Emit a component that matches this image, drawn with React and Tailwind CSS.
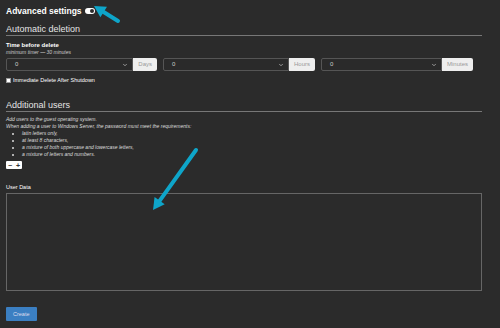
import { ChevronDown } from 'lucide-react';

function Arrow({ className, x1, y1, x2, y2 }) {
  const angle = Math.atan2(y2 - y1, x2 - x1);
  const len = 13;
  const spread = 0.5;
  const ax = x2 - len * Math.cos(angle - spread);
  const ay = y2 - len * Math.sin(angle - spread);
  const bx = x2 - len * Math.cos(angle + spread);
  const by = y2 - len * Math.sin(angle + spread);
  const sx = x2 - len * 0.8 * Math.cos(angle);
  const sy = y2 - len * 0.8 * Math.sin(angle);
  return (
    <svg className={className} width="500" height="328" viewBox="0 0 500 328">
      <line x1={x1} y1={y1} x2={sx} y2={sy} stroke="#0ea5c9" strokeWidth="4" strokeLinecap="round" />
      <polygon points={`${x2},${y2} ${ax},${ay} ${bx},${by}`} fill="#0ea5c9" />
    </svg>
  );
}

function TimeSelect({ label, width }) {
  return (
    <div className={`flex h-[13px] ${width}`}>
      <div className="flex flex-1 items-center justify-between rounded-l-[2px] border border-[#555] bg-[#2a2a2a] pl-2 pr-1 text-[6px] text-[#ccc]">
        <span>0</span>
        <ChevronDown size={6} strokeWidth={3} className="text-[#bbb]" />
      </div>
      <div className="flex items-center rounded-r-[2px] bg-[#eee] px-[5px] text-[6px] text-[#999]">{label}</div>
    </div>
  );
}

export default function App() {
  return (
    <div className="relative h-[328px] w-[500px] overflow-hidden bg-[#2b2b2b] font-['Liberation_Sans',Arial,sans-serif] text-[#ddd]">
      <div className="flex flex-col pl-[6px] pr-[18px]">
        <div className="flex h-[21px] items-center gap-[3px] pt-[1px]">
          <span className="text-[8.5px] font-bold text-white">Advanced settings</span>
          <span className="flex h-[6px] w-[10px] items-center justify-end rounded-full bg-white pr-[1px]">
            <span className="h-[4px] w-[4px] rounded-full bg-[#2b2b2b]" />
          </span>
        </div>

        <div className="mt-[3px] border-b border-[#777] text-[9px] leading-[11px] text-[#e5e5e5]">Automatic deletion</div>
        <div className="mt-[5px] text-[6px] font-bold leading-[8px] text-white">Time before delete</div>
        <div className="text-[5px] italic leading-[7px] text-[#ccc]">minimum timer — 30 minutes</div>

        <div className="mt-[2px] flex gap-[6px]">
          <TimeSelect label="Days" width="w-[151px]" />
          <TimeSelect label="Hours" width="w-[152px]" />
          <TimeSelect label="Minutes" width="w-[152px]" />
        </div>

        <div className="mt-[5px] flex items-center gap-[2px]">
          <span className="h-[5px] w-[5px] border border-[#999] bg-white" />
          <span className="text-[5.5px] leading-[8px] text-white">Immediate Delete After Shutdown</span>
        </div>

        <div className="mt-[16px] border-b border-[#777] text-[9px] leading-[11px] text-[#e5e5e5]">Additional users</div>
        <div className="mt-[4px] text-[5px] italic leading-[7px] text-[#ddd]">Add users to the guest operating system.</div>
        <div className="text-[5px] italic leading-[7px] text-[#ddd]">When adding a user to Windows Server, the password must meet the requirements:</div>
        <ul className="ml-[16px] list-disc text-[5px] italic leading-[7px] text-[#ddd]">
          <li>latin letters only,</li>
          <li>at least 8 characters,</li>
          <li>a mixture of both uppercase and lowercase letters,</li>
          <li>a mixture of letters and numbers.</li>
        </ul>

        <div className="mt-[3px] flex h-[8px] w-[16px] items-center justify-around rounded-[1px] bg-white text-[7px] font-bold leading-none text-[#333]">
          <span>−</span>
          <span>+</span>
        </div>

        <div className="mt-[14px] text-[5.5px] leading-[8px] text-white">User Data</div>
        <div className="mt-[2px] h-[98px] w-[476px] border border-[#666] bg-[#2b2b2b]" />

        <div className="mt-[16px] flex">
          <button className="h-[14px] rounded-[1px] bg-[#3b7fc2] px-[7px] text-[5.5px] text-[#dde]">Create</button>
        </div>
      </div>

      <Arrow className="pointer-events-none absolute left-0 top-0" x1={118} y1={21} x2={94} y2={6} />
      <Arrow className="pointer-events-none absolute left-0 top-0" x1={196} y1={150} x2={153} y2={210} />
    </div>
  );
}
